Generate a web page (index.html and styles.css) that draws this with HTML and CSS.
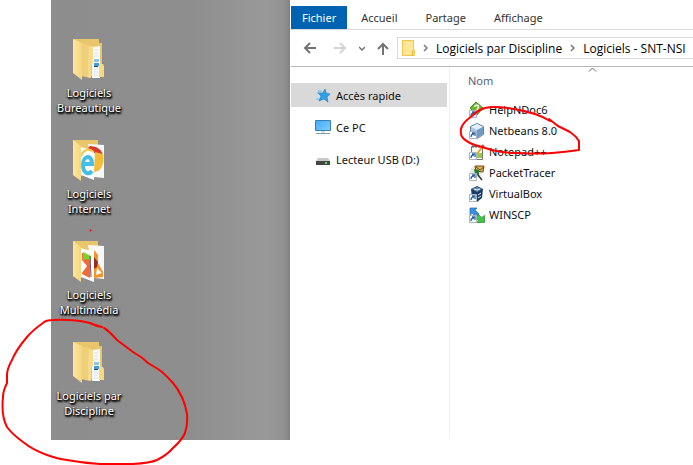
FILE: index.html
```html
<!DOCTYPE html>
<html lang="fr">
<head>
    <meta charset="UTF-8">
    <title>Logiciels - SNT-NSI</title>
    <link rel="stylesheet" href="styles.css">
</head>
<body>
<svg class="defs" aria-hidden="true">
    <defs>
        <linearGradient id="gold" x1="0" x2="1">
            <stop offset="0" stop-color="#fde69a"/>
            <stop offset="1" stop-color="#f6d680"/>
        </linearGradient>
        <linearGradient id="screen" x1="0" y1="0" x2="1" y2="1">
            <stop offset="0" stop-color="#3fa9f5"/>
            <stop offset="1" stop-color="#7fd0ff"/>
        </linearGradient>
        <g id="folder-docs">
            <path d="M2 1h25v4h3v34h-8L2 35z" fill="#e9c66b"/>
            <path d="M20 9l8-1v32h-8z" fill="#f7f9fb"/>
            <path d="M22 12h4M22 15h4M22 18h4M22 31h4M22 34h4M22 37h4" stroke="#dde3e7"/>
            <path d="M22 21h5v3h-5z" fill="#8cc6e6"/>
            <path d="M22 25h5v3h-5z" fill="#3d9fd6"/>
            <path d="M22 28h4v1h-4z" fill="#1b4f78"/>
            <path d="M27 26h4l1 2v11h-5z" fill="#f6d981"/>
            <path d="M9 5l11 3v18l-2 2v12l-9-2z" fill="#efcf79"/>
            <path d="M17 8l4 1v16l-2 2v13l-3-1V27z" fill="#f8dc8b"/>
            <path d="M1 1l9 4v37l-9-7z" fill="url(#gold)"/>
        </g>
        <g id="shortcut">
            <path d="M.5 8.500h7v7h-7z" fill="#fff" stroke="#a9b4bf"/>
            <path d="M2 14c0-2 1-3 3-3M3 10h3v3" fill="none" stroke="#2467ae" stroke-width="1.300"/>
        </g>
    </defs>
</svg>

<main class="screen">
    <nav class="desktop" aria-label="Bureau">
        <a class="shortcut" href="#">
            <svg width="34" height="43" viewBox="0 0 34 43"><use href="#folder-docs"/></svg>
            <span>Logiciels Bureautique</span>
        </a>
        <a class="shortcut" href="#">
            <svg width="34" height="43" viewBox="0 0 34 43">
                <path d="M1 1h25v8L9 38 1 35z" fill="#e9c66b"/>
                <path d="M16 5l16 1v33l-10-1z" fill="#f8f8f8"/>
                <path d="M18 7c7 0 12 4 13 9l-9-2-6-5z" fill="#d93a2d"/>
                <path d="M31 15c2 9-2 18-9 18l1-20z" fill="#f5bc3a"/>
                <path d="M9 8l13 4v29L9 36z" fill="#fcfdfd"/>
                <path d="M12 25h8c0-10-9-9-9 1 0 9 6 10 9 6" fill="none" stroke="#45bde9" stroke-width="4"/>
                <path d="M9 17c3-7 9-8 12-4" fill="none" stroke="#f3c545" stroke-width="2"/>
                <path d="M1 1l8 6v35l-8-6z" fill="url(#gold)"/>
            </svg>
            <span>Logiciels Internet</span>
        </a>
        <a class="shortcut" href="#">
            <svg width="34" height="43" viewBox="0 0 34 43">
                <path d="M1 1h25v8L9 38 1 35z" fill="#e9c66b"/>
                <path d="M16 5l16 1v33l-10-1z" fill="#f8f8f8"/>
                <path d="M22 10l4 5v8l5 9v5l-9 1z" fill="#f4942a"/>
                <path d="M22 17l4 5-1 5-3 2z" fill="#8f3026"/>
                <path d="M25 28l5 5-6 2z" fill="#fff"/>
                <path d="M9 8l13 4v30L9 37z" fill="#fcfdfd"/>
                <path d="M10 13l8 3v22l-8-4z" fill="#f26935"/>
                <path d="M11 12l8 4v6l-3-3-5 1z" fill="#79d32f"/>
                <path d="M10 20l5 6-5 7z" fill="#fff"/>
                <path d="M18 16l1 21" stroke="#6d4d76"/>
                <path d="M1 1l8 6v35l-8-6z" fill="url(#gold)"/>
            </svg>
            <span>Logiciels Multimédia</span>
        </a>
        <a class="shortcut" href="#">
            <svg width="34" height="43" viewBox="0 0 34 43"><use href="#folder-docs"/></svg>
            <span>Logiciels par Discipline</span>
        </a>
    </nav>

    <section class="explorer">
        <div class="tabs">
            <button class="tab active">Fichier</button>
            <button class="tab">Accueil</button>
            <button class="tab">Partage</button>
            <button class="tab">Affichage</button>
        </div>

        <div class="toolbar">
            <button class="arrow" aria-label="Précédent">
                <svg width="14" height="12" viewBox="0 0 14 12"><path d="M13 6H2M7 1L2 6l5 5" stroke="#737373"/></svg>
            </button>
            <button class="arrow forward" aria-label="Suivant">
                <svg width="14" height="12" viewBox="0 0 14 12"><path d="M1 6h11M7 1l5 5-5 5" stroke="#d4d4d4"/></svg>
            </button>
            <button class="arrow small" aria-label="Emplacements récents">
                <svg width="6" height="5" viewBox="0 0 6 5"><path d="M0 1l3 3 3-3" stroke="#737373"/></svg>
            </button>
            <button class="arrow" aria-label="Dossier parent">
                <svg width="12" height="13" viewBox="0 0 12 13"><path d="M6 13V2M1 7l5-5 5 5" stroke="#737373"/></svg>
            </button>
            <div class="address">
                <svg width="13" height="17" viewBox="0 0 13 17">
                    <path d="M.5.500h11v9l1 1v5H.5z" fill="#ffe796" stroke="#efc44f"/>
                    <path d="M10.500 16v-5l2-1" fill="none" stroke="#e4b63c"/>
                </svg>
                <svg class="sep" width="5" height="8" viewBox="0 0 5 8"><path d="M1 1l3 3-3 3"/></svg>
                <a href="#">Logiciels par Discipline</a>
                <svg class="sep" width="5" height="8" viewBox="0 0 5 8"><path d="M1 1l3 3-3 3"/></svg>
                <a href="#">Logiciels - SNT-NSI</a>
            </div>
        </div>

        <div class="content">
            <nav class="sidebar" aria-label="Volet de navigation">
                <a class="place selected" href="#">
                    <svg width="16" height="16" viewBox="0 0 16 16">
                        <path d="M10 2l1 4 4 1-3 3 1 5-4-3-5 2 2-5-3-3h5z" fill="#2fa0e8" stroke="#1878bd" stroke-width=".6"/>
                        <path d="M3 4h4M2 6h3M1 12h3" stroke="#5cb7ef"/>
                    </svg>
                    <span>Accès rapide</span>
                </a>
                <a class="place" href="#">
                    <svg width="16" height="16" viewBox="0 0 16 16">
                        <path d="M.5 1.500h15v10H.5z" fill="url(#screen)" stroke="#3a80af"/>
                        <path d="M6 13h4" stroke="#a9bdc9"/>
                        <path d="M1 14.500h14" stroke="#7fa0b5"/>
                    </svg>
                    <span>Ce PC</span>
                </a>
                <a class="place" href="#">
                    <svg width="16" height="16" viewBox="0 0 16 16">
                        <path d="M3 7h10l2 3H1z" fill="#c9c9c9"/>
                        <path d="M1 10h14v4H1z" fill="#454545"/>
                        <path d="M10 12h2" stroke="#3bea54" stroke-width="2"/>
                    </svg>
                    <span>Lecteur USB (D:)</span>
                </a>
            </nav>

            <div class="files">
                <svg class="sort" width="9" height="5" viewBox="0 0 9 5"><path d="M1 4.500L4.500 1 8 4.500"/></svg>
                <table>
                    <thead>
                        <tr><th scope="col">Nom</th></tr>
                    </thead>
                    <tbody>
                        <tr><td><a href="#">
                            <svg width="16" height="16" viewBox="0 0 16 16">
                                <path d="M7 0l7 6-6 7-7-7z" fill="#6fb52c" stroke="#4e8a1c"/>
                                <path d="M6 5c0-3 5-2 3 1L8 8M8 9v2" fill="none" stroke="#fff" stroke-width="1.500"/>
                                <use href="#shortcut"/>
                            </svg>
                            <span>HelpNDoc6</span>
                        </a></td></tr>
                        <tr><td><a href="#">
                            <svg width="16" height="16" viewBox="0 0 16 16">
                                <path d="M8 .5l6.500 3v8L8 15.500l-6.500-4v-8z" fill="#a9c5df" stroke="#66809d"/>
                                <path d="M2 4l6-3 6 3-6 3z" fill="#e6f0f8"/>
                                <path d="M8 7l6-3v7l-6 4z" fill="#6f9cc7"/>
                                <use href="#shortcut"/>
                            </svg>
                            <span>Netbeans 8.0</span>
                        </a></td></tr>
                        <tr><td><a href="#">
                            <svg width="16" height="16" viewBox="0 0 16 16">
                                <path d="M2.500 2.500h11v13h-11z" fill="#fcfcf4" stroke="#77786f"/>
                                <path d="M4 1v3M7 1v3M10 1v3" stroke="#555"/>
                                <path d="M8 9h5v5H8z" fill="#98c943"/>
                                <path d="M14 2L8 10" stroke="#e7a52c" stroke-width="2"/>
                                <path d="M13 1l2 2" stroke="#cf412d" stroke-width="2"/>
                                <use href="#shortcut"/>
                            </svg>
                            <span>Notepad++</span>
                        </a></td></tr>
                        <tr><td><a href="#">
                            <svg width="16" height="16" viewBox="0 0 16 16">
                                <circle cx="7" cy="7" r="6" fill="#e3e6e2"/>
                                <path d="M6 1h9l-1 6-7-1z" fill="#e3b34b" stroke="#6c4a1d"/>
                                <path d="M7 2l4 3 4-3" fill="none" stroke="#6c4a1d"/>
                                <path d="M5 4l5 1v6L6 9z" fill="#267a31"/>
                                <path d="M9 10l4 5" stroke="#333" stroke-width="1.500"/>
                                <use href="#shortcut"/>
                            </svg>
                            <span>PacketTracer</span>
                        </a></td></tr>
                        <tr><td><a href="#">
                            <svg width="16" height="16" viewBox="0 0 16 16">
                                <path d="M8 0l6 3-1 9-5 4-5-4-1-9z" fill="#183c66"/>
                                <path d="M3 3l5-2 5 2-5 3z" fill="#5f88b2"/>
                                <path d="M5 3l3 1 3-1M9 9l3-2M9 12l3-2" fill="none" stroke="#e3eef7"/>
                                <use href="#shortcut"/>
                            </svg>
                            <span>VirtualBox</span>
                        </a></td></tr>
                        <tr><td><a href="#">
                            <svg width="16" height="16" viewBox="0 0 16 16">
                                <path d="M1 1h7L6 3l4 4-3 3-4-4-2 2z" fill="#3b91df" stroke="#2269aa" stroke-width=".7"/>
                                <path d="M15.500 15.500h-8l2-2-3-3 3-3 3 3 3-2z" fill="#42c544" stroke="#218829" stroke-width=".7"/>
                                <use href="#shortcut"/>
                            </svg>
                            <span>WINSCP</span>
                        </a></td></tr>
                    </tbody>
                </table>
            </div>
        </div>
    </section>

    <!-- hand-drawn pen marks -->
    <svg class="marks" width="693" height="465" viewBox="0 0 693 465" aria-hidden="true">
        <path d="M102 327Q96 326 90 323Q73 319 53 320Q46 320 43 323Q33 330 27 337Q16 350 12 360Q7 369 7 375L7 383Q3 391 3 397Q1 416 7 427Q12 434 23 442Q33 450 47 455Q58 459 67 460Q83 463 100 464H133Q150 463 157 460Q167 455 173 448Q182 440 185 433Q188 424 187 414Q184 396 173 383Q164 373 158 369L148 363Q142 357 133 352L117 340Q108 330 104 328"/>
        <path d="M550 121Q544 117 535 114Q522 110 508 108Q493 106 485 108Q478 110 472 116Q462 123 461 129Q460 135 463 138Q468 143 475 145L492 150Q503 153 518 153Q536 154 552 153Q565 152 579 150L579 141Q576 136 570 132L558 126L549 119"/>
        <path d="M90.500 230.500v.1"/>
    </svg>
</main>
</body>
</html>
```
FILE: styles.css
```css
*{
    box-sizing: border-box;
}

body{
    margin: 0;
    background-color: white;
    color: #111;
    font-family: "Noto Sans", "Open Sans", sans-serif;
    font-size: 11px;
}

a{
    color: inherit;
    text-decoration: none;
}

svg{
    display: block;
    flex: none;
}

button{
    border: none;
    padding: 0;
    background: none;
    font: inherit;
    color: inherit;
}

.defs{
    position: absolute;
    width: 0;
    height: 0;
}

.screen{
    position: relative;
    display: flex;
    align-items: flex-start;
    min-height: 100vh;
    padding-left: 51px;
}

/* desktop */
.desktop{
    flex: none;
    display: flex;
    flex-direction: column;
    gap: 24px;
    padding: 38px 163px 22px 0;
    background: linear-gradient(to right, #8d8d8d 0%, #8e8e8e 60%, #999 90%, #929292 97%, #818181 100%);
}

.shortcut{
    display: flex;
    flex-direction: column;
    align-items: center;
    gap: 4px;
    width: 76px;
    color: white;
    line-height: 15px;
    text-align: center;
    text-shadow: 1px 1px 2px black, 0 1px 2px black, 1px 2px 2px black;
}

/* explorer window */
.explorer{
    flex: 1;
    min-width: 0;
    padding: 6px 0 0 1px;
}

.tabs{
    display: flex;
    border-bottom: 1px solid #dadbdc;
}

.tab{
    height: 23px;
    padding: 0 14px;
    color: #333;
}

.tab.active{
    padding: 0 11px;
    background-color: #0063b1;
    color: white;
}

.toolbar{
    display: flex;
    align-items: center;
    gap: 12px;
    height: 37px;
    padding-left: 12px;
    border-bottom: 1px solid #b5b8ba;
}

.arrow path{
    fill: none;
    stroke-width: 2;
}

.arrow.forward{
    margin-left: 4px;
}

.arrow.small path{
    stroke-width: 1.5;
}

.address{
    flex: 1;
    min-width: 0;
    display: flex;
    align-items: center;
    gap: 8px;
    height: 22px;
    margin-left: -4px;
    padding-left: 4px;
    border: 1px solid #d9d9d9;
    border-right: none;
    font-family: "Open Sans", "Noto Sans", sans-serif;
    font-size: 12px;
    white-space: nowrap;
    color: black;
}

.sep path{
    fill: none;
    stroke: #777;
    stroke-width: 1.5;
}

.content{
    display: flex;
}

.sidebar{
    display: flex;
    flex-direction: column;
    gap: 8px;
    width: 159px;
    padding: 16px 2px 0 0;
    border-right: 1px solid #f0f0f0;
}

.place{
    display: flex;
    align-items: center;
    gap: 5px;
    height: 24px;
    padding-left: 24px;
}

.place.selected{
    background-color: #d9d9d9;
}

.files{
    position: relative;
    flex: 1;
    min-height: 372px;
    padding-left: 18px;
}

.sort{
    position: absolute;
    top: 0;
    left: 138px;
}

.sort path{
    fill: none;
    stroke: #666;
}

table{
    border-collapse: collapse;
}

th{
    height: 32px;
    padding: 0 0 6px;
    font-weight: normal;
    text-align: left;
    color: #56617b;
}

td{
    padding: 0;
}

td a{
    display: flex;
    align-items: center;
    gap: 4px;
    height: 21px;
    padding-left: 1px;
}

/* red pen */
.marks{
    position: absolute;
    top: 0;
    left: 0;
    pointer-events: none;
}

.marks path{
    fill: none;
    stroke: #f00;
    stroke-width: 2;
    stroke-linecap: round;
    stroke-linejoin: round;
}
```
